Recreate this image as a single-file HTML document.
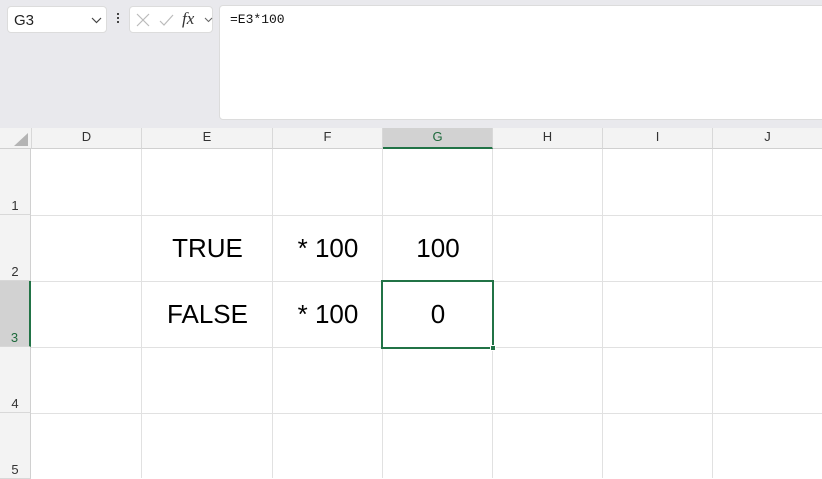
<!DOCTYPE html><html><head><style>
*{margin:0;padding:0;box-sizing:border-box}
body{width:822px;height:478px;overflow:hidden;background:#fff;font-family:"Liberation Sans",sans-serif;position:relative}
.top{position:absolute;left:0;top:0;width:822px;height:128px;background:#e9e9ed}
.box{position:absolute;background:#fff;border-radius:4px;border:1px solid #dcdcdc}
.a{position:absolute}
.ch{position:absolute;top:128px;height:21px;background:#f3f3f3;border-bottom:1px solid #d0d0d0;border-right:1px solid #d8d8d8;font-size:13px;color:#333;text-align:center;line-height:18px}
.rh{position:absolute;left:0;width:31px;background:#f3f3f3;border-right:1px solid #d0d0d0;border-bottom:1px solid #d8d8d8;font-size:13px;color:#333;text-align:center}
.vl{position:absolute;top:149px;bottom:0;width:1px;background:#e1e1e1}
.hl{position:absolute;left:31px;right:0;height:1px;background:#e1e1e1}
.c{position:absolute;font-size:26px;color:#000;text-align:center;line-height:66px;height:66px}
</style></head><body>
<div class="top"></div>
<div class="box" style="left:7px;top:6px;width:100px;height:27px"><span class="a" style="left:6px;top:5px;font-size:15px;color:#222">G3</span>
<svg class="a" style="left:83px;top:10px" width="11" height="7"><path d="M1 1l4.5 4.5L10 1" stroke="#444" fill="none" stroke-width="1.2"/></svg></div>
<div class="a" style="left:117px;top:13px;width:2px;height:2px;background:#444;box-shadow:0 4px #444,0 8px #444"></div>
<div class="box" style="left:129px;top:6px;width:84px;height:27px">
<svg class="a" style="left:5px;top:5px" width="80" height="16"><path d="M2 2l12 12M14 2L2 14" stroke="#bbb" stroke-width="1.2"/><path d="M25 9l4 4 9-10" stroke="#bbb" fill="none" stroke-width="1.2"/><path d="M70 6l3.5 3.5L77 6" stroke="#666" fill="none" stroke-width="1.1"/></svg>
<span class="a" style="left:52px;top:2px;font-family:'Liberation Serif',serif;font-style:italic;font-size:17px;color:#333">fx</span></div>
<div class="box" style="left:219px;top:5px;width:610px;height:115px;border-radius:4px"><span class="a" style="left:10px;top:6px;font-family:'Liberation Mono',monospace;font-size:13px;color:#111">=E3*100</span></div>
<div class="ch" style="left:0;width:32px;background:#f3f3f3"><svg class="a" style="left:13px;top:5px" width="16" height="14"><path d="M15 0V13H1z" fill="#b4b4b4"/></svg></div>
<div class="ch" style="left:32px;width:110px">D</div>
<div class="ch" style="left:142px;width:131px">E</div>
<div class="ch" style="left:273px;width:110px">F</div>
<div class="ch" style="left:383px;width:110px;background:#d2d2d2;color:#1e6a3c;border-bottom:2px solid #217346">G</div>
<div class="ch" style="left:493px;width:110px">H</div>
<div class="ch" style="left:603px;width:110px">I</div>
<div class="ch" style="left:713px;width:110px">J</div>
<div class="rh" style="top:149px;height:66px;padding-top:49px">1</div>
<div class="rh" style="top:215px;height:66px;padding-top:49px">2</div>
<div class="rh" style="top:281px;height:66px;padding-top:49px;background:#d2d2d2;color:#1e6a3c;border-right:2px solid #217346">3</div>
<div class="rh" style="top:347px;height:66px;padding-top:49px">4</div>
<div class="rh" style="top:413px;height:66px;padding-top:49px">5</div>
<div class="vl" style="left:141px"></div><div class="vl" style="left:272px"></div><div class="vl" style="left:382px"></div><div class="vl" style="left:492px"></div><div class="vl" style="left:602px"></div><div class="vl" style="left:712px"></div>
<div class="hl" style="top:215px"></div><div class="hl" style="top:281px"></div><div class="hl" style="top:347px"></div><div class="hl" style="top:413px"></div>
<div class="c" style="left:142px;width:131px;top:215px">TRUE</div>
<div class="c" style="left:273px;width:110px;top:215px">* 100</div>
<div class="c" style="left:383px;width:110px;top:215px">100</div>
<div class="c" style="left:142px;width:131px;top:281px">FALSE</div>
<div class="c" style="left:273px;width:110px;top:281px">* 100</div>
<div class="c" style="left:383px;width:110px;top:281px">0</div>
<div class="a" style="left:381px;top:280px;width:113px;height:69px;border:2px solid #217346"></div>
<div class="a" style="left:490px;top:345px;width:6px;height:6px;background:#217346;border:1px solid #fff"></div>
</body></html>
